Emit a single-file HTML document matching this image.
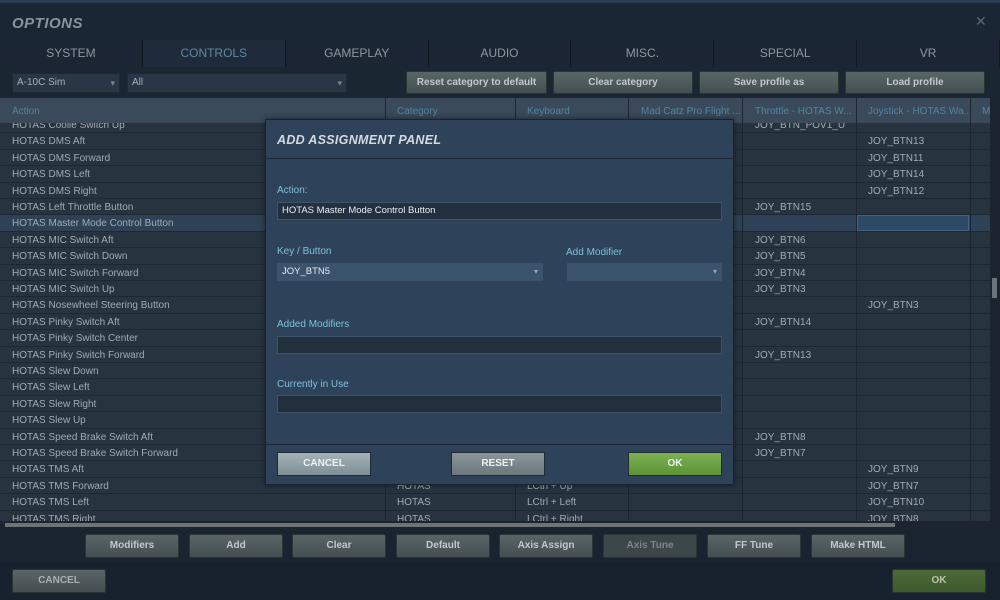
<!DOCTYPE html>
<html><head><style>
*{margin:0;padding:0;box-sizing:border-box}
body{width:1000px;height:600px;overflow:hidden;background:#1a2431;font-family:"Liberation Sans",sans-serif;position:relative}
.abs{position:absolute}
.title{left:0;top:0;width:1000px;height:40px;background:#1b2634;border-top:3px solid #2b3d52}
.title span{position:absolute;left:12px;top:12px;font-size:15px;font-weight:bold;font-style:italic;color:#8b949c;letter-spacing:.5px}
.tabs{left:0;top:40px;width:1000px;height:27px;background:#17202b;display:flex}
.tabs div{flex:1;text-align:center;line-height:27px;font-size:12px;color:#8e979f;border-right:1px solid #10161e;background:#1b2533}
.tabs .on{color:#5a8aa0;background:#1f2b3a}
.bar{left:0;top:67px;width:1000px;height:31px;background:#1b2633}
.dd{height:20px;top:73px;background:#283646;border:1px solid #202a36;color:#a8b0b8;font-size:10px;line-height:18px;padding-left:4px}
.dd:after{content:"▾";position:absolute;right:4px;top:0;font-size:9px;color:#7a838c}
.btn{background:linear-gradient(#5a6566,#454f51);border:1px solid #2c3436;color:#c2c8cc;font-size:10px;font-weight:bold;text-align:center;border-radius:2px}
.tbl{left:0;top:98px;width:990px;height:423px;background:#27333f;overflow:hidden;z-index:1}
.hdr{left:0;top:0;width:990px;height:25px;background:#3a4a5b;font-size:10px;color:#4f86a3;z-index:2}
.hdr span{position:absolute;top:8px}
.row{position:absolute;left:0;width:990px;height:16.4px;border-bottom:1px solid #1f2832;font-size:10px;color:#a3aab1;line-height:16px}
.row span{position:absolute;top:1px}
.vl{position:absolute;top:0;width:1px;height:423px;background:#1d2630;z-index:3}
.modal{left:265px;top:119px;width:469px;height:366px;background:#2e4359;border:1px solid #1a232d;box-shadow:0 0 6px rgba(0,0,0,.5);z-index:10}
.modal h1{position:absolute;left:11px;top:13px;font-size:12.5px;font-style:italic;font-weight:bold;color:#d4dae0;letter-spacing:.3px}
.lbl{position:absolute;font-size:10px;color:#7cc0dc}
.in{position:absolute;height:18px;background:#222f3d;border:1px solid #3c536a;font-size:9.5px;color:#e8ecf0;line-height:16px;padding-left:4px}
.mb{position:absolute;top:332px;width:94px;height:24px;line-height:22px;font-size:10px;font-weight:bold;color:#eef2f4;text-align:center;border:1px solid #1f2a34}
.bb{top:534px;width:94px;height:24px;line-height:22px}
</style></head><body>
<div class="abs title"><span>OPTIONS</span><span style="left:975px;top:10px;font-style:normal;font-weight:normal;font-size:14px;color:#5d6670">✕</span></div>
<div class="abs tabs"><div>SYSTEM</div><div class="on">CONTROLS</div><div>GAMEPLAY</div><div>AUDIO</div><div>MISC.</div><div>SPECIAL</div><div>VR</div></div>
<div class="abs bar"></div>
<div class="abs dd" style="left:12px;width:108px">A-10C Sim</div>
<div class="abs dd" style="left:127px;width:220px">All</div>
<div class="abs btn" style="left:406px;top:71px;width:141px;height:23px;line-height:21px">Reset category to default</div>
<div class="abs btn" style="left:553px;top:71px;width:140px;height:23px;line-height:21px">Clear category</div>
<div class="abs btn" style="left:699px;top:71px;width:140px;height:23px;line-height:21px">Save profile as</div>
<div class="abs btn" style="left:845px;top:71px;width:140px;height:23px;line-height:21px">Load profile</div>
<div class="abs tbl">
<div class="abs hdr"><span style="left:12px">Action</span><span style="left:397px">Category</span><span style="left:527px">Keyboard</span><span style="left:641px">Mad Catz Pro Flight ...</span><span style="left:755px">Throttle - HOTAS W...</span><span style="left:868px">Joystick - HOTAS Wa...</span><span style="left:982px">M</span></div>
<div style="position:absolute;left:0;top:27px;width:990px">
<div class="row" style="top:-8px"><span style="left:12px">HOTAS Coolie Switch Up</span><span style="left:755px">JOY_BTN_POV1_U</span></div>
<div class="row" style="top:8.4px"><span style="left:12px">HOTAS DMS Aft</span><span style="left:868px">JOY_BTN13</span></div>
<div class="row" style="top:24.8px"><span style="left:12px">HOTAS DMS Forward</span><span style="left:868px">JOY_BTN11</span></div>
<div class="row" style="top:41.2px"><span style="left:12px">HOTAS DMS Left</span><span style="left:868px">JOY_BTN14</span></div>
<div class="row" style="top:57.6px"><span style="left:12px">HOTAS DMS Right</span><span style="left:868px">JOY_BTN12</span></div>
<div class="row" style="top:74px"><span style="left:12px">HOTAS Left Throttle Button</span><span style="left:755px">JOY_BTN15</span></div>
<div class="row" style="top:90.4px;background:#2d4256"><span style="left:12px">HOTAS Master Mode Control Button</span><span style="left:857px;top:0;width:112px;height:16px;background:#2c4a66;border:1px solid #3f6485"></span></div>
<div class="row" style="top:106.8px"><span style="left:12px">HOTAS MIC Switch Aft</span><span style="left:755px">JOY_BTN6</span></div>
<div class="row" style="top:123.2px"><span style="left:12px">HOTAS MIC Switch Down</span><span style="left:755px">JOY_BTN5</span></div>
<div class="row" style="top:139.6px"><span style="left:12px">HOTAS MIC Switch Forward</span><span style="left:755px">JOY_BTN4</span></div>
<div class="row" style="top:156px"><span style="left:12px">HOTAS MIC Switch Up</span><span style="left:755px">JOY_BTN3</span></div>
<div class="row" style="top:172.4px"><span style="left:12px">HOTAS Nosewheel Steering Button</span><span style="left:868px">JOY_BTN3</span></div>
<div class="row" style="top:188.8px"><span style="left:12px">HOTAS Pinky Switch Aft</span><span style="left:755px">JOY_BTN14</span></div>
<div class="row" style="top:205.2px"><span style="left:12px">HOTAS Pinky Switch Center</span></div>
<div class="row" style="top:221.6px"><span style="left:12px">HOTAS Pinky Switch Forward</span><span style="left:755px">JOY_BTN13</span></div>
<div class="row" style="top:238px"><span style="left:12px">HOTAS Slew Down</span></div>
<div class="row" style="top:254.4px"><span style="left:12px">HOTAS Slew Left</span></div>
<div class="row" style="top:270.8px"><span style="left:12px">HOTAS Slew Right</span></div>
<div class="row" style="top:287.2px"><span style="left:12px">HOTAS Slew Up</span></div>
<div class="row" style="top:303.6px"><span style="left:12px">HOTAS Speed Brake Switch Aft</span><span style="left:755px">JOY_BTN8</span></div>
<div class="row" style="top:320px"><span style="left:12px">HOTAS Speed Brake Switch Forward</span><span style="left:755px">JOY_BTN7</span></div>
<div class="row" style="top:336.4px"><span style="left:12px">HOTAS TMS Aft</span><span style="left:868px">JOY_BTN9</span></div>
<div class="row" style="top:352.8px"><span style="left:12px">HOTAS TMS Forward</span><span style="left:397px">HOTAS</span><span style="left:527px">LCtrl + Up</span><span style="left:868px">JOY_BTN7</span></div>
<div class="row" style="top:369.2px"><span style="left:12px">HOTAS TMS Left</span><span style="left:397px">HOTAS</span><span style="left:527px">LCtrl + Left</span><span style="left:868px">JOY_BTN10</span></div>
<div class="row" style="top:385.6px"><span style="left:12px">HOTAS TMS Right</span><span style="left:397px">HOTAS</span><span style="left:527px">LCtrl + Right</span><span style="left:868px">JOY_BTN8</span></div>
</div>
<div class="vl" style="left:385px"></div><div class="vl" style="left:515px"></div><div class="vl" style="left:628px"></div><div class="vl" style="left:742px"></div><div class="vl" style="left:856px"></div><div class="vl" style="left:970px"></div>
</div>
<div class="abs" style="left:990px;top:98px;width:10px;height:423px;background:#1c252f"><div style="position:absolute;left:2px;top:180px;width:5px;height:20px;background:#6a7378"></div></div>
<div class="abs" style="left:0;top:521px;width:1000px;height:8px;background:#1c252f"><div style="position:absolute;left:5px;top:2px;width:890px;height:4px;background:#6e7376"></div></div>
<div class="abs btn bb" style="left:85px">Modifiers</div>
<div class="abs btn bb" style="left:189px">Add</div>
<div class="abs btn bb" style="left:292px">Clear</div>
<div class="abs btn bb" style="left:396px">Default</div>
<div class="abs btn bb" style="left:499px">Axis Assign</div>
<div class="abs btn bb" style="left:603px;background:#3d4648;color:#7d8589">Axis Tune</div>
<div class="abs btn bb" style="left:707px">FF Tune</div>
<div class="abs btn bb" style="left:811px">Make HTML</div>
<div class="abs" style="left:0;top:562px;width:1000px;height:38px;background:#18222e"></div>
<div class="abs btn" style="left:12px;top:569px;width:94px;height:24px;line-height:22px;color:#a8aeb2">CANCEL</div>
<div class="abs btn" style="left:892px;top:569px;width:94px;height:24px;line-height:22px;background:linear-gradient(#4c6a38,#3e5a2c);color:#b8c4ae">OK</div>
<div class="abs modal">
<h1>ADD ASSIGNMENT PANEL</h1>
<div style="position:absolute;left:0;top:38px;width:467px;height:1px;background:#1c2733"></div>
<div class="lbl" style="left:11px;top:65px">Action:</div>
<div class="in" style="left:11px;top:82px;width:445px;background:#233040">HOTAS Master Mode Control Button</div>
<div class="lbl" style="left:11px;top:126px">Key / Button</div>
<div class="lbl" style="left:300px;top:127px">Add Modifier</div>
<div class="in" style="left:11px;top:143px;width:266px;background:#3b536d">JOY_BTN5<span style="position:absolute;right:4px;font-size:8px;color:#9aa">▾</span></div>
<div class="in" style="left:301px;top:143px;width:155px;background:#3b536d"><span style="position:absolute;right:4px;font-size:8px;color:#9aa">▾</span></div>
<div class="lbl" style="left:11px;top:199px">Added Modifiers</div>
<div class="in" style="left:11px;top:216px;width:445px"></div>
<div class="lbl" style="left:11px;top:259px">Currently in Use</div>
<div class="in" style="left:11px;top:275px;width:445px"></div>
<div style="position:absolute;left:0;top:324px;width:467px;height:1px;background:#1c2733"></div>
<div class="mb" style="left:11px;background:linear-gradient(#a3b3b7,#7f9094)">CANCEL</div>
<div class="mb" style="left:185px;background:linear-gradient(#8a9699,#6b777a)">RESET</div>
<div class="mb" style="left:362px;background:linear-gradient(#7cb251,#5c9336)">OK</div>
</div>
</body></html>
